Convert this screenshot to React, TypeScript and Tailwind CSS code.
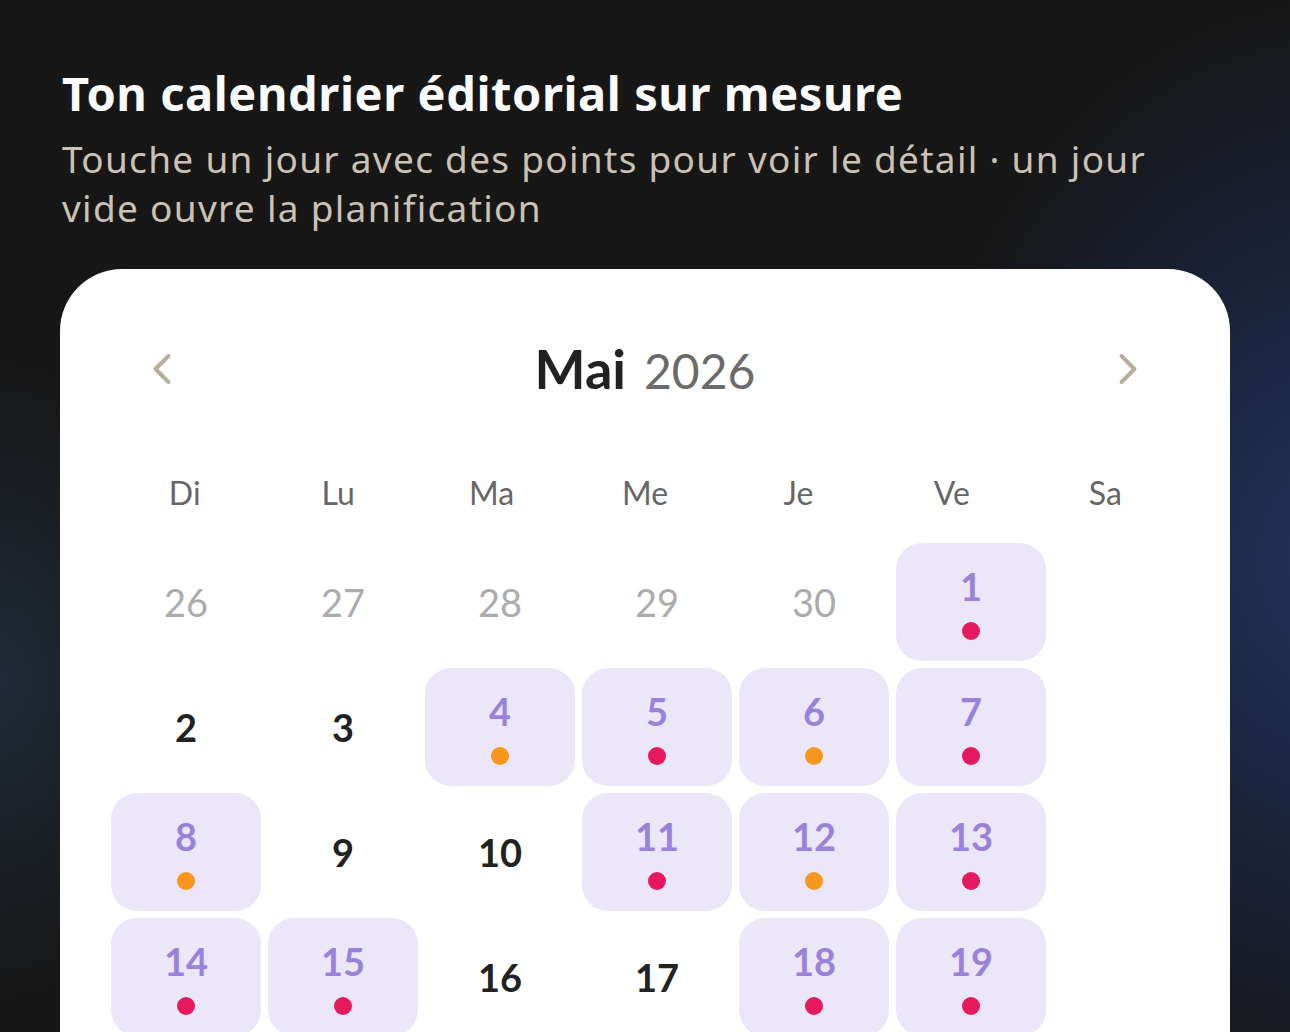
import { ChevronLeft, ChevronRight } from "lucide-react";

type Dot = "pink" | "orange";

type Day = {
	n: number;
	muted?: boolean;
	dot?: Dot;
};

const WEEKDAYS = ["Di", "Lu", "Ma", "Me", "Je", "Ve", "Sa"];

// mai 2026 — seules les 4 premières semaines sont visibles
const WEEKS: (Day | null)[][] = [
	[
		{ n: 26, muted: true },
		{ n: 27, muted: true },
		{ n: 28, muted: true },
		{ n: 29, muted: true },
		{ n: 30, muted: true },
		{ n: 1, dot: "pink" },
		null,
	],
	[
		{ n: 2 },
		{ n: 3 },
		{ n: 4, dot: "orange" },
		{ n: 5, dot: "pink" },
		{ n: 6, dot: "orange" },
		{ n: 7, dot: "pink" },
		null,
	],
	[
		{ n: 8, dot: "orange" },
		{ n: 9 },
		{ n: 10 },
		{ n: 11, dot: "pink" },
		{ n: 12, dot: "orange" },
		{ n: 13, dot: "pink" },
		null,
	],
	[
		{ n: 14, dot: "pink" },
		{ n: 15, dot: "pink" },
		{ n: 16 },
		{ n: 17 },
		{ n: 18, dot: "pink" },
		{ n: 19, dot: "pink" },
		null,
	],
];

function DayCell({ day }: { day: Day | null }) {
	if (!day) return <div className="h-[118px]" />;

	if (day.dot) {
		return (
			<button
				type="button"
				className="flex h-[118px] flex-col items-center justify-center gap-[17px] rounded-[26px] bg-[#ece7f8] pt-[2px]"
			>
				<span className="text-[38px] font-bold leading-none text-[#9a82dc]">
					{day.n}
				</span>
				<span
					className={`size-[18px] rounded-full ${
						day.dot === "pink" ? "bg-[#e6195f]" : "bg-[#f8961e]"
					}`}
				/>
			</button>
		);
	}

	return (
		<button
			type="button"
			className={`flex h-[118px] items-center justify-center text-[38px] leading-none ${
				day.muted ? "font-normal text-[#acacac]" : "font-bold text-[#222222]"
			}`}
		>
			{day.n}
		</button>
	);
}

export default function App() {
	return (
		<div className="relative h-[1032px] w-full overflow-hidden bg-[#171717] font-['Lato','Noto_Sans',sans-serif]">
			<div className="pointer-events-none absolute inset-0 bg-[radial-gradient(ellipse_420px_560px_at_1330px_560px,#22305a_0%,rgba(30,42,80,0.75)_40%,rgba(23,23,23,0)_100%)]" />
			<div className="pointer-events-none absolute inset-0 bg-[radial-gradient(ellipse_200px_320px_at_0px_680px,rgba(32,44,58,0.9)_0%,rgba(23,23,23,0)_100%)]" />

			<div className="relative px-[62px] pt-[63px] font-['Noto_Sans','Lato',sans-serif]">
				<h1 className="text-[47px] font-bold leading-[60px] tracking-[0.012em] text-[#fafafa]">
					Ton calendrier éditorial sur mesure
				</h1>
				<p className="mt-[11px] text-[37px] leading-[49px] tracking-[0.035em] text-[#cbc2b5]">
					Touche un jour avec des points pour voir le détail · un jour
					<br />
					vide ouvre la planification
				</p>
			</div>

			<div className="relative mx-[60px] mt-[37px] h-[900px] rounded-t-[62px] bg-white">
				<div className="flex items-center justify-between pl-[76px] pr-[76px] pt-[73px]">
					<ChevronLeft className="size-[52px] text-[#b6ad9d]" strokeWidth={1.8} />
					<div className="flex items-baseline gap-[18px]">
						<span className="text-[54px] font-bold leading-none text-[#222222]">
							Mai
						</span>
						<span className="text-[48px] leading-none text-[#6b6b6b]">2026</span>
					</div>
					<ChevronRight className="size-[52px] text-[#b6ad9d]" strokeWidth={1.8} />
				</div>

				<div className="mt-[81px] grid grid-cols-7 px-[48px]">
					{WEEKDAYS.map((d) => (
						<div
							key={d}
							className="text-center text-[32px] leading-none text-[#666666]"
						>
							{d}
						</div>
					))}
				</div>

				<div className="ml-[51px] mt-[34px] grid grid-cols-[repeat(7,150px)] gap-x-[7px] gap-y-[7px]">
					{WEEKS.flat().map((day, i) => (
						<DayCell key={i} day={day} />
					))}
				</div>
			</div>
		</div>
	);
}
